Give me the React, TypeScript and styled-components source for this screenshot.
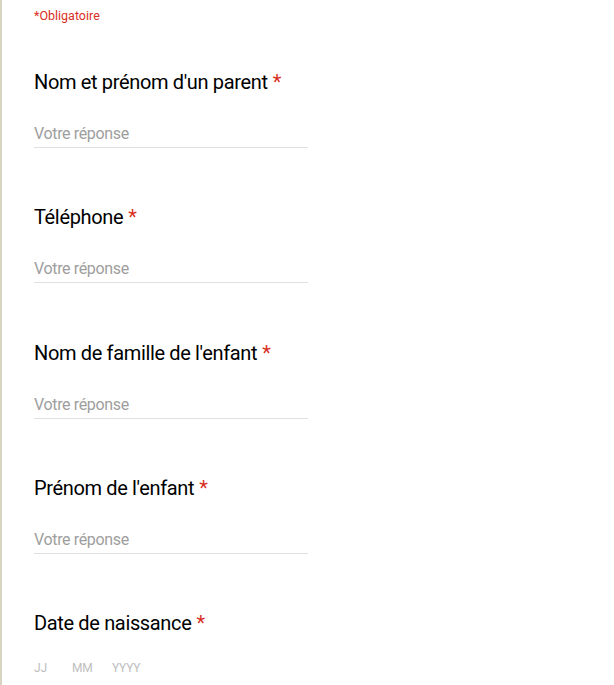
import React from "react";
import styled, { createGlobalStyle } from "styled-components";

const Global = createGlobalStyle`
  html, body { margin: 0; padding: 0; background: #fff; }
  body { font-family: Roboto, "Liberation Sans", Arial, sans-serif; }
`;

const Page = styled.div`
  min-height: 685px;
  border-left: 2px solid #d9d4c1;
  padding-left: 32px;
  box-sizing: border-box;
  background: #fff;
`;

const Required = styled.div`
  padding-top: 8px;
  font-size: 12.5px;
  line-height: 16px;
  color: #d93025;
`;

const Question = styled.section`
  display: flex;
  flex-direction: column;
  padding-top: ${(p: { $first?: boolean }) => (p.$first ? "46px" : "57.3px")};
`;

const Title = styled.div`
  font-size: 20px;
  line-height: 24px;
  color: #000;
  letter-spacing: -0.35px;
`;

const Star = styled.span`
  color: #d93025;
  margin-left: 5px;
`;

const Answer = styled.div`
  margin-top: 28px;
  width: 274px;
  font-size: 16px;
  line-height: 24px;
  padding-bottom: 1px;
  color: #9e9e9e;
  border-bottom: 1px solid #e0e0e0;
  letter-spacing: -0.35px;
`;

const DateRow = styled.div`
  display: flex;
  margin-top: 25px;
  font-size: 12px;
  line-height: 16px;
  color: #bdbdbd;
  letter-spacing: -0.2px;
`;

const DatePart = styled.span<{ $w: number }>`
  width: ${(p) => p.$w}px;
`;

const questions = [
  "Nom et prénom d'un parent",
  "Téléphone",
  "Nom de famille de l'enfant",
  "Prénom de l'enfant",
];

export default function App() {
  return (
    <>
      <Global />
      <Page>
        <Required>*Obligatoire</Required>
        {questions.map((q, i) => (
          <Question key={q} $first={i === 0}>
            <Title>
              {q}
              <Star>*</Star>
            </Title>
            <Answer>Votre réponse</Answer>
          </Question>
        ))}
        <Question>
          <Title>
            Date de naissance
            <Star>*</Star>
          </Title>
          <DateRow>
            <DatePart $w={38}>JJ</DatePart>
            <DatePart $w={40}>MM</DatePart>
            <DatePart $w={40}>YYYY</DatePart>
          </DateRow>
        </Question>
      </Page>
    </>
  );
}
